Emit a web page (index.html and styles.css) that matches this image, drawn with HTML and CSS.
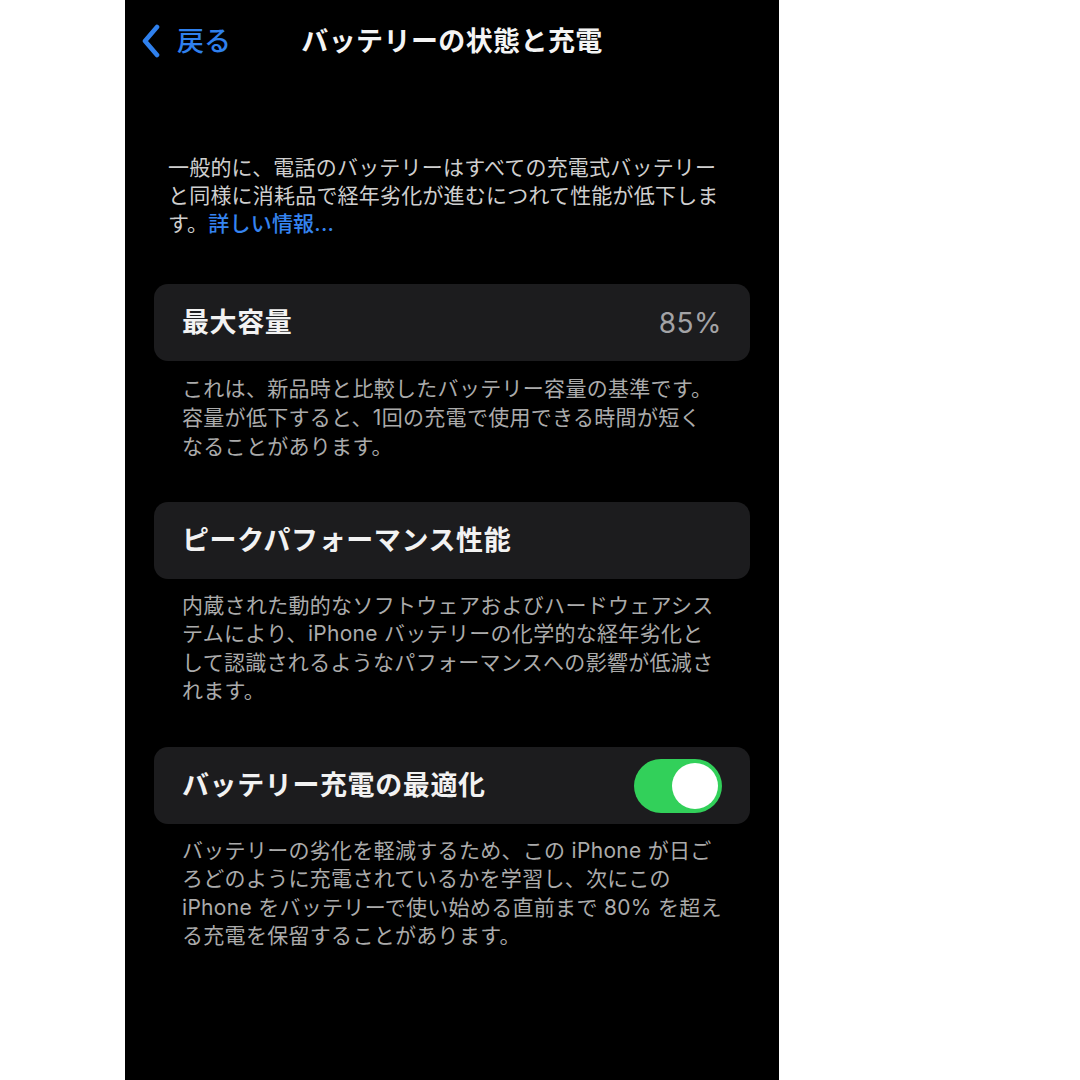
FILE: index.html
```html
<!DOCTYPE html>
<html lang="ja">
<head>
<meta charset="utf-8">
<link rel="stylesheet" href="styles.css">
</head>
<body>
<div class="phone">
  <header class="nav">
    <div class="back">
      <svg class="chev" width="22" height="34" viewBox="0 0 22 34"><path d="M17 3 L5 17 L17 31" fill="none" stroke="#2f80ed" stroke-width="4.6" stroke-linecap="round" stroke-linejoin="round"/></svg>
      <span class="back-text">戻る</span>
    </div>
    <h1 class="title">バッテリーの状態と充電</h1>
    <div></div>
  </header>

  <p class="intro">一般的に、電話のバッテリーはすべての充電式バッテリー<br>と同様に消耗品で経年劣化が進むにつれて性能が低下しま<br>す。<span class="link">詳しい情報...</span></p>

  <section class="group g1">
    <div class="card">
      <span class="card-title">最大容量</span>
      <span class="value">85%</span>
    </div>
    <p class="foot f1">これは、新品時と比較したバッテリー容量の基準です。<br>容量が低下すると、1回の充電で使用できる時間が短く<br>なることがあります。</p>
  </section>

  <section class="group g2">
    <div class="card">
      <span class="card-title">ピークパフォーマンス性能</span>
    </div>
    <p class="foot">内蔵された動的なソフトウェアおよびハードウェアシス<br>テムにより、iPhone バッテリーの化学的な経年劣化と<br>して認識されるようなパフォーマンスへの影響が低減さ<br>れます。</p>
  </section>

  <section class="group g3">
    <div class="card">
      <span class="card-title">バッテリー充電の最適化</span>
      <span class="toggle"><span class="knob"></span></span>
    </div>
    <p class="foot">バッテリーの劣化を軽減するため、この iPhone が日ご<br>ろどのように充電されているかを学習し、次にこの<br>iPhone をバッテリーで使い始める直前まで 80% を超え<br>る充電を保留することがあります。</p>
  </section>
</div>
</body>
</html>
```

FILE: styles.css
```css
html, body {
  margin: 0;
  padding: 0;
  background: #ffffff;
}
body {
  font-family: "Inter", "Noto Sans CJK JP", sans-serif;
}
.phone {
  margin-left: 125px;
  width: 654px;
  height: 1080px;
  background: #000000;
  overflow: hidden;
}
.nav {
  display: grid;
  grid-template-columns: 1fr auto 1fr;
  align-items: center;
  height: 82px;
}
.back {
  display: flex;
  align-items: center;
  gap: 15px;
  padding-left: 15px;
}
.chev {
  display: block;
}
.back-text {
  color: #2f80ed;
  font-size: 27px;
  font-weight: 500;
  line-height: 1;
}
.title {
  margin: 0;
  color: #f4f4f4;
  font-size: 27px;
  font-weight: 700;
  line-height: 1;
  letter-spacing: 0.4px;
}
.intro {
  margin: 72px 0 0 0;
  padding-left: 43px;
  color: #cfcfcf;
  font-size: 21px;
  line-height: 28px;
  letter-spacing: 0.2px;
}
.link {
  color: #3584f0;
  font-weight: 500;
}
.group {
  margin: 0 29px;
}
.g1 { margin-top: 46px; }
.g2 { margin-top: 41px; }
.g3 { margin-top: 42px; }
.card {
  display: flex;
  align-items: center;
  justify-content: space-between;
  height: 77px;
  padding: 0 28px;
  background: #1c1c1e;
  border-radius: 14px;
}
.card-title {
  color: #f2f2f2;
  font-size: 27px;
  font-weight: 700;
  line-height: 1;
  letter-spacing: 0.6px;
}
.value {
  color: #a3a3a6;
  font-size: 28px;
  font-weight: 400;
  line-height: 1;
  letter-spacing: 0.5px;
}
.foot {
  margin: 13px 0 0 0;
  padding-left: 28px;
  color: #ababab;
  font-size: 21px;
  line-height: 28.3px;
  letter-spacing: 0.3px;
}
.f1 {
  line-height: 29px;
}
.toggle {
  position: relative;
  display: block;
  width: 88px;
  height: 54px;
  border-radius: 27px;
  background: #32d05a;
}
.knob {
  position: absolute;
  top: 4px;
  right: 4px;
  width: 46px;
  height: 46px;
  border-radius: 50%;
  background: #ffffff;
}
```
